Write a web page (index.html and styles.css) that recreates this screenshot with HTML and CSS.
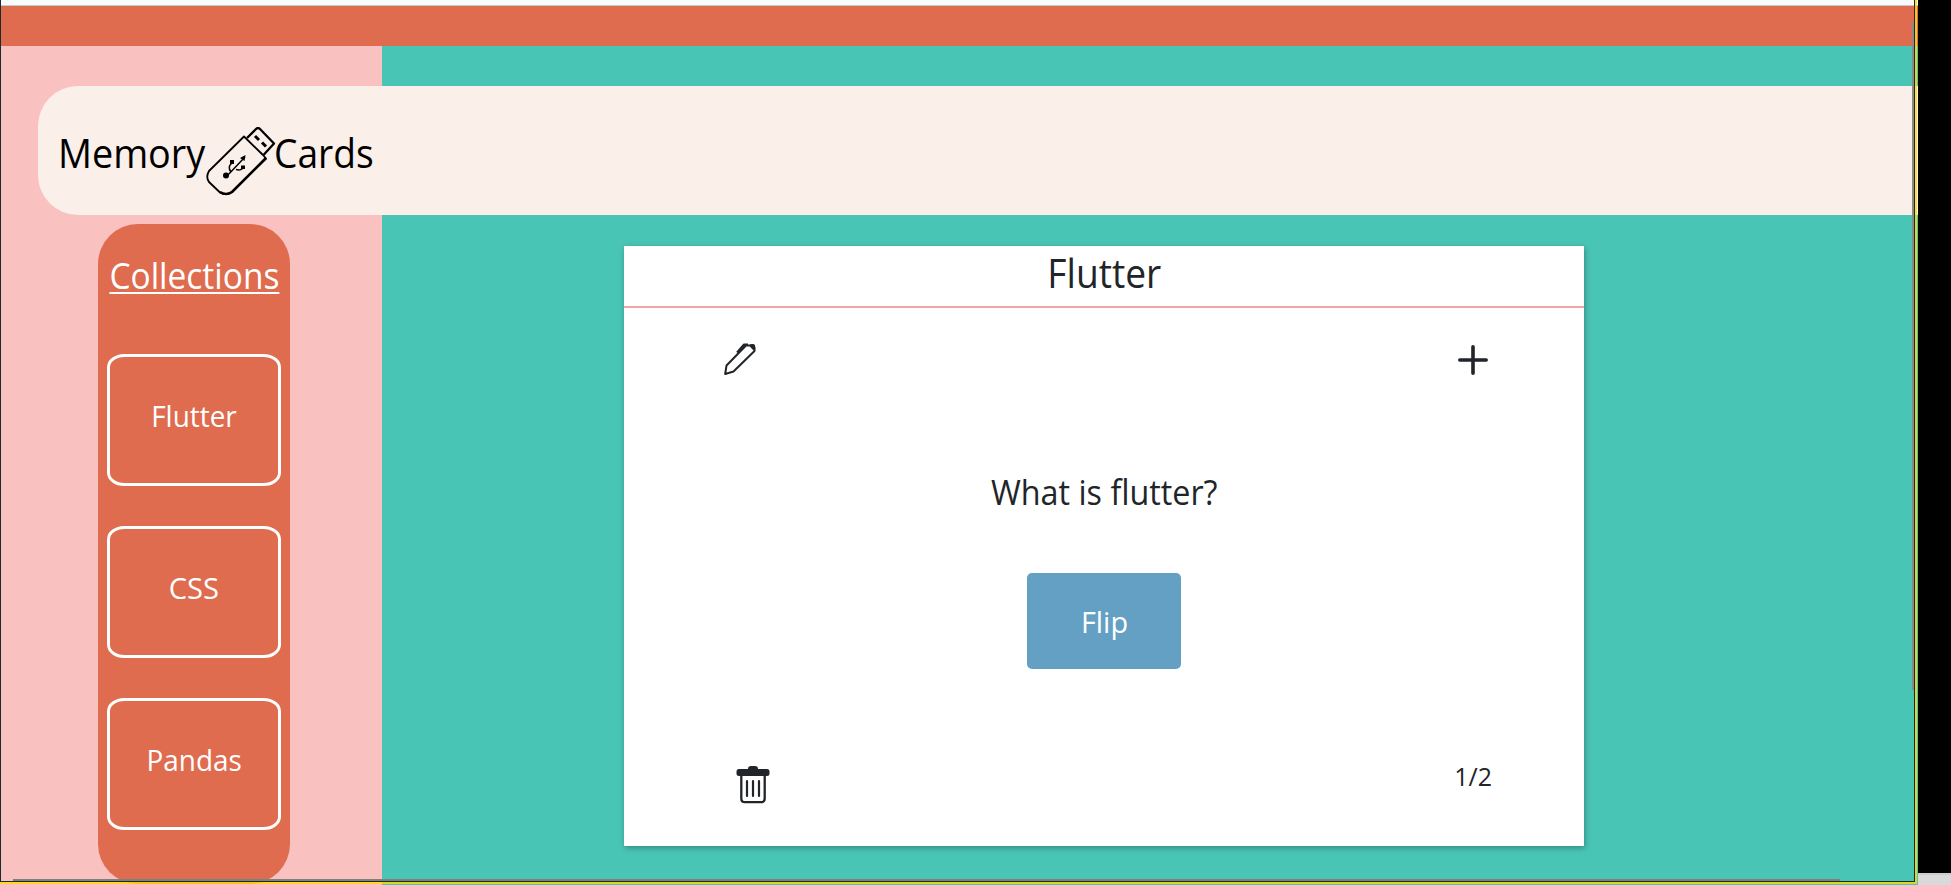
FILE: index.html
```
<!DOCTYPE html>
<html lang="en">
<head>
<meta charset="utf-8">
<title>Memory Cards</title>
<link rel="stylesheet" href="styles.css">
</head>
<body>
<div class="screen">
  <div class="app">
    <div class="browser-edge"></div>
    <div class="top-bar"></div>
    <div class="page">
      <header class="header">
        <span class="brand memory"><b>Memory</b></span>
        <svg class="usb" width="70" height="70" viewBox="0 0 70 70" fill="none" stroke="#000" stroke-width="1.8" stroke-linejoin="round">
          <path d="M38 9.500 L3 44 Q-.5 50 3 55 L14 65.500 Q20 69 26 65 L60 31.500 L57 28 Z"/>
          <path d="M41 11 L50 2 Q52 0 54 2 L68 16.500 L57.500 28" stroke-width="2.300"/>
          <path d="M60 31 L26 65 Q20 69 14 65" stroke-width="2.500"/>
          <path d="M49 9 l4 4 M56 15.500 l4 4" stroke-width="3"/>
          <path d="M20 50 L39 30 M25 45 Q21 40 26 36 M30 42.500 Q36 44 37 40" stroke-width="1.500"/>
          <circle cx="20" cy="48.500" r="3" fill="#000" stroke="none"/>
          <path d="M24 33 h4 v4 h-4z M35 38.500 h4 v3.500 h-4z M34 31 l5.500 -3 -1 6z" fill="#000" stroke="none"/>
        </svg>
        <span class="brand cards"><b>Cards</b></span>
      </header>
      <div class="columns">
        <nav class="collections">
          <h2 class="collections-title"><b>Collections</b></h2>
          <a class="collection"><b>Flutter</b></a>
          <a class="collection css"><b>CSS</b></a>
          <a class="collection"><b>Pandas</b></a>
        </nav>
        <main class="card">
          <h1 class="card-title"><b>Flutter</b></h1>
          <div class="card-tools">
            <svg class="pencil" width="32" height="32" viewBox="0 0 32 32" fill="none" stroke="#212529" stroke-width="2" stroke-linejoin="round">
              <path d="M1.200 31 L2.500 22.500 L22 2.500 H29 Q31 3 30.500 8 L9.500 28.500 Z M13 9.500 L20 1.500 H24"/>
              <path d="M25 2 Q29 0 31 2 V8 Q28 7 25 2Z" fill="#212529" stroke="none"/>
            </svg>
            <svg class="plus" width="30" height="30" viewBox="0 0 30 30" stroke="#212529" stroke-width="3.600" stroke-linecap="round"><path d="M15 1.800 V28.200 M1.800 15 H28.200"/></svg>
          </div>
          <p class="question"><b>What is flutter?</b></p>
          <button class="flip"><b>Flip</b></button>
          <div class="card-foot">
            <svg class="trash" width="34" height="38" viewBox="0 0 34 38">
              <path d="M3 3 H12 Q12 0 15 0 H19 Q22 0 22 3 H31 Q33.500 3 33.500 5.500 V7.500 Q33.500 10 31 10 H3 Q.5 10 .5 7.500 V5.500 Q.5 3 3 3Z" fill="#212529"/>
              <path d="M5.300 9 V32.500 Q5.300 36.200 9 36.200 H25 Q28.700 36.200 28.700 32.500 V9" fill="none" stroke="#212529" stroke-width="2.300"/>
              <path d="M11 15 V30 M17 15 V30 M23 15 V30" stroke="#212529" stroke-width="2.200" stroke-linecap="round"/>
            </svg>
            <span class="count"><b>1/2</b></span>
          </div>
        </main>
      </div>
    </div>
    <div class="scroll-v"></div>
    <div class="scroll-h"></div>
    <div class="frame-dark"></div>
    <div class="frame-yellow"></div>
  </div>
  <div class="desktop"></div>
</div>
</body>
</html>
```
FILE: styles.css
```
* { box-sizing: border-box; }
body { margin: 0; font-family: "Open Sans", "Noto Sans", sans-serif; color: #212529; }
b { display: inline-block; font-weight: 400; white-space: nowrap; transform: scaleX(.93); }
.screen { display: flex; width: 1951px; height: 885px; overflow: hidden; background: #000; }
.app { position: relative; width: 1918px; height: 885px; overflow: hidden; }
.browser-edge { height: 6px; background: #f9fafc; border-bottom: 1px solid #c6cacd; }
.top-bar { height: 40px; background: #df6c4f; }
.page { height: 839px; padding-top: 40px; background: linear-gradient(to right, #f9c1c0 382px, #49c5b6 382px); }
.header { display: flex; align-items: center; height: 129px; margin-left: 38px; padding-left: 20px; background: #faefe9; border-radius: 40px 0 0 40px; color: #000; }
.brand { font-size: 40px; line-height: 60px; padding-top: 4px; }
.brand b { transform-origin: left; }
.memory { width: 148px; }
.memory b { transform: scaleX(.944); }
.cards { margin-left: -2px; }
.usb { margin: 22px 0 0 0; }
.columns { display: flex; align-items: flex-start; }
.collections { display: flex; flex-direction: column; align-items: center; gap: 40px; width: 192px; height: 660px; margin: 9px 0 0 98px; padding-top: 24px; background: #df6c4f; border-radius: 40px; color: #fff; }
.collections-title { height: 66px; margin: 0; font-size: 36px; font-weight: 400; line-height: 56px; }
.collections-title b { text-decoration: underline; text-decoration-thickness: 2px; text-underline-offset: 3px; text-decoration-skip-ink: none; }
.collection { display: flex; align-items: center; justify-content: center; width: 174px; height: 132px; flex: none; border: 3px solid #fff; border-radius: 10%; font-size: 30px; line-height: 40px; padding-bottom: 8px; }
.css b { transform: scaleX(.97); }
.card { display: flex; flex-direction: column; align-items: center; width: 960px; height: 600px; margin: 31px 0 0 334px; background: #fff; box-shadow: 1px 2px 6px rgba(0,0,0,.3); }
.card-title { width: 100%; height: 62px; margin: 0; border-bottom: 2px solid #f0a5a3; font-size: 40px; font-weight: 400; line-height: 54px; text-align: center; }
.card-tools { display: flex; justify-content: space-between; width: 100%; padding: 35px 96px 0 100px; }
.plus { margin-top: 2px; }
.question { margin: 92px 0 0; font-size: 34px; line-height: 50px; }
.question b { transform: scaleX(.95); }
.flip { width: 154px; height: 96px; margin-top: 56px; padding: 2px 0 0; border: 0; border-radius: 5px; background: #649fc4; color: #fff; font: 30px/40px "Open Sans", "Noto Sans", sans-serif; }
.flip b { transform: scaleX(.96); }
.card-foot { display: flex; justify-content: space-between; width: 100%; padding: 97px 92px 0 112px; }
.count { margin-top: -2px; font-size: 25px; line-height: 24px; }
.count b { transform: none; }
.scroll-v { position: absolute; left: 1912px; top: 21px; width: 2px; height: 669px; background: #898989; }
.scroll-h { position: absolute; left: 13px; top: 879px; width: 1827px; height: 2px; background: #817f7c; }
.frame-dark { position: absolute; left: 0; top: -1px; width: 1915px; height: 883px; border: 1px solid #1c2a2b; }
.frame-yellow { position: absolute; left: -2px; top: -2px; width: 1919px; height: 886px; border: 2px solid rgba(255,220,0,.8); }
.desktop { width: 33px; height: 12px; margin-top: 873px; background: #d9d9d9; border-top: 2px solid #ccc; }
```
